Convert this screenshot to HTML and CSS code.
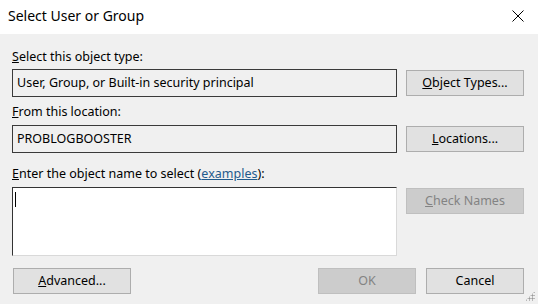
FILE: index.html
```html
<!DOCTYPE html>
<html>
<head>
<meta charset="utf-8">
<link rel="stylesheet" href="styles.css">
</head>
<body>
<div class="dialog">
  <div class="titlebar">
    <span class="title">Select User or Group</span>
    <svg class="close" width="12" height="12" viewBox="0 0 12 12"><path d="M0.5 0.5L11.5 11.5M11.5 0.5L0.5 11.5" stroke="#000" stroke-width="1" fill="none"/></svg>
  </div>
  <div class="content">
    <div class="label l1"><u>S</u>elect this object type:</div>
    <div class="row">
      <div class="field">User, Group, or Built-in security principal</div>
      <button class="btn"><u>O</u>bject Types...</button>
    </div>
    <div class="label l2"><u>F</u>rom this location:</div>
    <div class="row">
      <div class="field">PROBLOGBOOSTER</div>
      <button class="btn"><u>L</u>ocations...</button>
    </div>
    <div class="label l3"><u>E</u>nter the object name to select (<a class="link">examples</a>):</div>
    <div class="row top">
      <div class="textarea"><span class="caret"></span></div>
      <button class="btn disabled"><u>C</u>heck Names</button>
    </div>
    <div class="footer">
      <button class="btn adv"><u>A</u>dvanced...</button>
      <div class="spacer"></div>
      <button class="btn small disabled">OK</button>
      <button class="btn small">Cancel</button>
    </div>
  </div>
  <div class="grip"></div>
</div>
</body>
</html>
```
FILE: styles.css
```css
html, body {
  margin: 0;
  padding: 0;
}
body {
  width: 538px;
  height: 304px;
  overflow: hidden;
  font-family: "Noto Sans", "Liberation Sans", sans-serif;
  font-size: 12.5px;
  color: #000;
  background: #f0f0f0;
}
.dialog {
  position: relative;
  width: 538px;
  height: 304px;
  background: #f0f0f0;
}
.titlebar {
  height: 34px;
  background: #fff;
  display: flex;
  align-items: center;
  padding: 0 14px 0 8px;
}
.title {
  flex: 1;
  font-size: 14px;
  line-height: 20px;
  margin-top: -2px;
}
.close {
  display: block;
  margin-top: -2px;
}
.content {
  padding: 15px 14px 0 12px;
}
.label {
  line-height: 16px;
  height: 16px;
  white-space: nowrap;
}
.l1 { margin-bottom: 4px; }
.l2 { margin-top: 7px; margin-bottom: 5px; }
.l3 { margin-top: 13px; margin-bottom: 5px; }
.link {
  color: #1f5a8c;
  text-decoration: underline;
}
.row {
  display: flex;
  align-items: center;
  gap: 9px;
}
.row.top {
  align-items: flex-start;
}
.field {
  flex: 1;
  height: 26px;
  border: 1px solid #3a3a3a;
  background: #f0f0f0;
  line-height: 26px;
  padding-left: 4px;
  white-space: nowrap;
}
.textarea {
  flex: 1;
  height: 67px;
  background: #fff;
  border-top: 1px solid #333;
  border-left: 1px solid #333;
  border-right: 1px solid #d9d9d9;
  border-bottom: 1px solid #d9d9d9;
  position: relative;
}
.caret {
  position: absolute;
  left: 2px;
  top: 4px;
  width: 1px;
  height: 15px;
  background: #000;
}
.row.top .btn {
  margin-top: 1px;
}
.btn {
  width: 118px;
  height: 26px;
  flex: none;
  border: 1px solid #adadad;
  background: #e1e1e1;
  font-family: inherit;
  font-size: 12.5px;
  color: #000;
  padding: 0;
  line-height: 24px;
  text-align: center;
}
.btn.disabled {
  background: #cccccc;
  border-color: #bfbfbf;
  color: #838383;
}
.btn.small {
  width: 98px;
}
.footer {
  display: flex;
  margin-top: 12px;
  gap: 10px;
}
.adv {
  margin-left: 1px;
}
.spacer {
  flex: 1;
}
.grip {
  position: absolute;
  right: 3px;
  bottom: 3px;
  width: 10px;
  height: 10px;
  background:
    radial-gradient(circle, #9a9a9a 0.9px, transparent 1.2px) 0 0 / 3px 3px;
  clip-path: polygon(100% 0, 100% 100%, 0 100%);
}
```
